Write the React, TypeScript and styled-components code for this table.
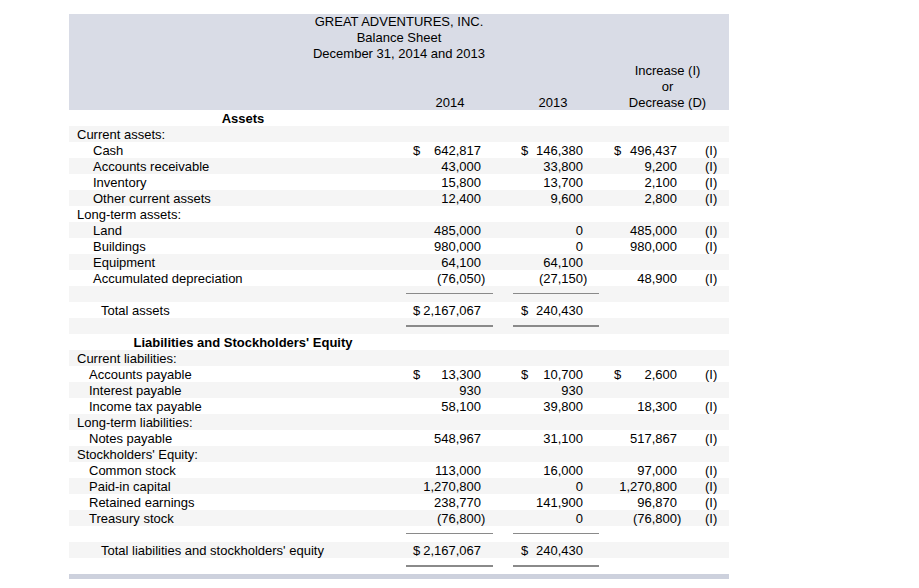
import React from "react";
import styled, { createGlobalStyle } from "styled-components";

const GlobalStyle = createGlobalStyle`
  html, body {
    margin: 0;
    padding: 0;
    background: #ffffff;
  }
  body {
    font-family: "Liberation Sans", Arial, sans-serif;
    font-size: 13px;
    color: #000000;
  }
`;

type ColKey = "y2014" | "y2013" | "inc";

const COLS = "331px 100px 106px 94px 29px";

const PAD: Record<ColKey, { left: number; right: number }> = {
  y2014: { left: 13, right: 19 },
  y2013: { left: 21, right: 23 },
  inc: { left: 8, right: 23 },
};

const RULE: Record<"y2014" | "y2013", { left: number; right: number }> = {
  y2014: { left: 6, right: 7 },
  y2013: { left: 13, right: 7 },
};

const Page = styled.div`
  padding: 14px 0 0 69px;
`;

const Sheet = styled.div`
  width: 660px;
  display: flex;
  flex-direction: column;
`;

const Header = styled.div`
  background: #d9dce6;
  height: 96px;
  display: flex;
  flex-direction: column;
  line-height: 16px;
`;

const Title = styled.div`
  text-align: center;
  height: 48px;
`;

const HeadGrid = styled.div`
  display: grid;
  grid-template-columns: ${COLS};
  padding-top: 1px;
  height: 48px;
`;

const HeadCell = styled.div<{ $col: number; $span?: number }>`
  grid-column: ${(p) => p.$col} / span ${(p) => p.$span ?? 1};
  align-self: end;
  text-align: center;
  white-space: nowrap;
`;

const Row = styled.div<{ $shade: boolean }>`
  display: grid;
  grid-template-columns: ${COLS};
  grid-template-rows: 16px;
  height: 16px;
  line-height: 18px;
  background: ${(p) => (p.$shade ? "#f5f5f5" : "#ffffff")};
  white-space: nowrap;
`;

const Label = styled.div<{ $indent: number }>`
  padding-left: ${(p) => p.$indent}px;
`;

const SectionHeading = styled.div`
  font-weight: bold;
  text-align: center;
  padding-left: 17px;
`;

const Amount = styled.div<{ $col: ColKey }>`
  display: flex;
  justify-content: space-between;
  padding-left: ${(p) => PAD[p.$col].left}px;
  padding-right: ${(p) => PAD[p.$col].right}px;
`;

const Num = styled.span<{ $neg: boolean }>`
  margin-left: auto;
  margin-right: ${(p) => (p.$neg ? "-4.3px" : "0")};
`;

const Flag = styled.div`
  padding-left: 5px;
`;

const Rule = styled.div<{ $col: "y2014" | "y2013"; $double: boolean }>`
  margin: 7px ${(p) => RULE[p.$col].right}px 0 ${(p) => RULE[p.$col].left}px;
  height: ${(p) => (p.$double ? 2 : 1)}px;
  background: #8a8a8a;
  align-self: start;
`;

const BottomBar = styled.div`
  height: 5px;
  background: #cdd1dd;
`;

type Money = { v: string; d?: boolean };

type Line =
  | { kind: "heading"; text: string }
  | { kind: "label"; text: string; indent: number }
  | {
      kind: "data";
      text: string;
      indent: number;
      a?: Money;
      b?: Money;
      c?: Money;
      flag?: boolean;
    }
  | { kind: "rule"; double: boolean };

const lines: Line[] = [
  { kind: "heading", text: "Assets" },
  { kind: "label", text: "Current assets:", indent: 8 },
  { kind: "data", text: "Cash", indent: 24, a: { v: "642,817", d: true }, b: { v: "146,380", d: true }, c: { v: "496,437", d: true }, flag: true },
  { kind: "data", text: "Accounts receivable", indent: 24, a: { v: "43,000" }, b: { v: "33,800" }, c: { v: "9,200" }, flag: true },
  { kind: "data", text: "Inventory", indent: 24, a: { v: "15,800" }, b: { v: "13,700" }, c: { v: "2,100" }, flag: true },
  { kind: "data", text: "Other current assets", indent: 24, a: { v: "12,400" }, b: { v: "9,600" }, c: { v: "2,800" }, flag: true },
  { kind: "label", text: "Long-term assets:", indent: 8 },
  { kind: "data", text: "Land", indent: 24, a: { v: "485,000" }, b: { v: "0" }, c: { v: "485,000" }, flag: true },
  { kind: "data", text: "Buildings", indent: 24, a: { v: "980,000" }, b: { v: "0" }, c: { v: "980,000" }, flag: true },
  { kind: "data", text: "Equipment", indent: 24, a: { v: "64,100" }, b: { v: "64,100" } },
  { kind: "data", text: "Accumulated depreciation", indent: 24, a: { v: "(76,050)" }, b: { v: "(27,150)" }, c: { v: "48,900" }, flag: true },
  { kind: "rule", double: false },
  { kind: "data", text: "Total assets", indent: 32, a: { v: "2,167,067", d: true }, b: { v: "240,430", d: true } },
  { kind: "rule", double: true },
  { kind: "heading", text: "Liabilities and Stockholders' Equity" },
  { kind: "label", text: "Current liabilities:", indent: 8 },
  { kind: "data", text: "Accounts payable", indent: 20, a: { v: "13,300", d: true }, b: { v: "10,700", d: true }, c: { v: "2,600", d: true }, flag: true },
  { kind: "data", text: "Interest payable", indent: 20, a: { v: "930" }, b: { v: "930" } },
  { kind: "data", text: "Income tax payable", indent: 20, a: { v: "58,100" }, b: { v: "39,800" }, c: { v: "18,300" }, flag: true },
  { kind: "label", text: "Long-term liabilities:", indent: 8 },
  { kind: "data", text: "Notes payable", indent: 20, a: { v: "548,967" }, b: { v: "31,100" }, c: { v: "517,867" }, flag: true },
  { kind: "label", text: "Stockholders' Equity:", indent: 8 },
  { kind: "data", text: "Common stock", indent: 20, a: { v: "113,000" }, b: { v: "16,000" }, c: { v: "97,000" }, flag: true },
  { kind: "data", text: "Paid-in capital", indent: 20, a: { v: "1,270,800" }, b: { v: "0" }, c: { v: "1,270,800" }, flag: true },
  { kind: "data", text: "Retained earnings", indent: 20, a: { v: "238,770" }, b: { v: "141,900" }, c: { v: "96,870" }, flag: true },
  { kind: "data", text: "Treasury stock", indent: 20, a: { v: "(76,800)" }, b: { v: "0" }, c: { v: "(76,800)" }, flag: true },
  { kind: "rule", double: false },
  { kind: "data", text: "Total liabilities and stockholders' equity", indent: 32, a: { v: "2,167,067", d: true }, b: { v: "240,430", d: true } },
  { kind: "rule", double: true },
];

function AmountCell({ col, m }: { col: ColKey; m?: Money }) {
  if (!m) return <div />;
  const neg = m.v.startsWith("(");
  return (
    <Amount $col={col}>
      {m.d ? <span>$</span> : null}
      <Num $neg={neg}>{m.v}</Num>
    </Amount>
  );
}

function SheetRow({ line, shade }: { line: Line; shade: boolean }) {
  switch (line.kind) {
    case "heading":
      return (
        <Row $shade={shade}>
          <SectionHeading>{line.text}</SectionHeading>
        </Row>
      );
    case "label":
      return (
        <Row $shade={shade}>
          <Label $indent={line.indent}>{line.text}</Label>
        </Row>
      );
    case "rule":
      return (
        <Row $shade={shade}>
          <div />
          <Rule $col="y2014" $double={line.double} />
          <Rule $col="y2013" $double={line.double} />
        </Row>
      );
    case "data":
      return (
        <Row $shade={shade}>
          <Label $indent={line.indent}>{line.text}</Label>
          <AmountCell col="y2014" m={line.a} />
          <AmountCell col="y2013" m={line.b} />
          <AmountCell col="inc" m={line.c} />
          <Flag>{line.flag ? "(I)" : ""}</Flag>
        </Row>
      );
  }
}

export default function App() {
  return (
    <>
      <GlobalStyle />
      <Page>
        <Sheet>
          <Header>
            <Title>
              GREAT ADVENTURES, INC.
              <br />
              Balance Sheet
              <br />
              December 31, 2014 and 2013
            </Title>
            <HeadGrid>
              <HeadCell $col={2}>2014</HeadCell>
              <HeadCell $col={3}>2013</HeadCell>
              <HeadCell $col={4} $span={2}>
                Increase (I)
                <br />
                or
                <br />
                Decrease (D)
              </HeadCell>
            </HeadGrid>
          </Header>
          {lines.map((line, i) => (
            <SheetRow key={i} line={line} shade={i % 2 === 1} />
          ))}
          <BottomBar />
        </Sheet>
      </Page>
    </>
  );
}
